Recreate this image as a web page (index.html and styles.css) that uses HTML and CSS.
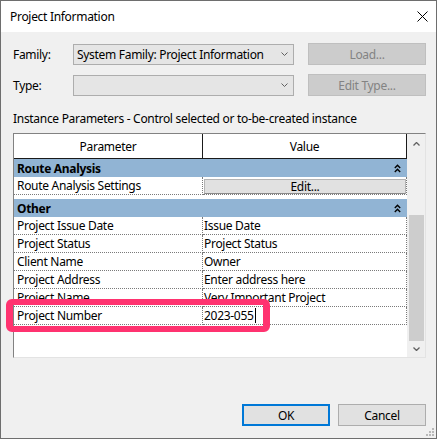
FILE: index.html
```html
<!DOCTYPE html>
<html>
<head>
<meta charset="utf-8">
<link rel="stylesheet" href="styles.css">
</head>
<body>
<div class="window">
  <div class="titlebar">
    <span class="title">Project Information</span>
    <svg class="close" width="11" height="11" viewBox="0 0 11 11"><path d="M0.5 0.5L10.5 10.5M10.5 0.5L0.5 10.5" stroke="#000" stroke-width="1" fill="none"/></svg>
  </div>
  <div class="content">
    <div class="form-row">
      <span class="form-label">Family:</span>
      <div class="combo"><span>System Family: Project Information</span><svg width="7" height="4" viewBox="0 0 7 4"><path d="M0.5 0.5L3.5 3.5L6.5 0.5" stroke="#606060" fill="none"/></svg></div>
      <div class="btn disabled side">Load...</div>
    </div>
    <div class="form-row">
      <span class="form-label">Type:</span>
      <div class="combo"><span></span><svg width="7" height="4" viewBox="0 0 7 4"><path d="M0.5 0.5L3.5 3.5L6.5 0.5" stroke="#606060" fill="none"/></svg></div>
      <div class="btn disabled side">Edit Type...</div>
    </div>
    <div class="section-label">Instance Parameters - Control selected or to-be-created instance</div>
    <div class="grid-frame">
      <div class="table">
        <div class="thead">
          <div class="th">Parameter</div>
          <div class="th">Value</div>
        </div>
        <div class="group"><span>Route Analysis</span><svg width="7" height="9" viewBox="0 0 7 9"><path d="M0.8 4L3.5 1.3L6.2 4M0.8 8L3.5 5.3L6.2 8" stroke="#000" stroke-width="1.4" fill="none"/></svg></div>
        <div class="row">
          <div class="cell">Route Analysis Settings</div>
          <div class="cell value edit-cell"><div class="edit-btn">Edit...</div></div>
        </div>
        <div class="spacer"></div>
        <div class="group"><span>Other</span><svg width="7" height="9" viewBox="0 0 7 9"><path d="M0.8 4L3.5 1.3L6.2 4M0.8 8L3.5 5.3L6.2 8" stroke="#000" stroke-width="1.4" fill="none"/></svg></div>
        <div class="row"><div class="cell">Project Issue Date</div><div class="cell value">Issue Date</div></div>
        <div class="row"><div class="cell">Project Status</div><div class="cell value">Project Status</div></div>
        <div class="row"><div class="cell">Client Name</div><div class="cell value">Owner</div></div>
        <div class="row"><div class="cell">Project Address</div><div class="cell value">Enter address here</div></div>
        <div class="row"><div class="cell">Project Name</div><div class="cell value">Very Important Project</div></div>
        <div class="row"><div class="cell">Project Number</div><div class="cell value">2023-055<span class="caret"></span></div></div>
        <div class="empty"></div>
      </div>
      <div class="scrollbar">
        <div class="arrow up"><svg width="7" height="4" viewBox="0 0 7 4"><path d="M0.5 3.5L3.5 0.5L6.5 3.5" stroke="#606060" stroke-width="1.3" fill="none"/></svg></div>
        <div class="thumb"></div>
        <div class="track-rest"></div>
        <div class="arrow down"><svg width="7" height="4" viewBox="0 0 7 4"><path d="M0.5 0.5L3.5 3.5L6.5 0.5" stroke="#606060" stroke-width="1.3" fill="none"/></svg></div>
      </div>
    </div>
    <div class="footer">
      <div class="btn ok">OK</div>
      <div class="btn">Cancel</div>
    </div>
  </div>
  <div class="highlight"></div>
  <svg class="grip" width="8" height="8" viewBox="0 0 8 8">
    <rect x="6" y="0" width="2" height="2" fill="#b8b8b8"/>
    <rect x="3" y="3" width="2" height="2" fill="#b8b8b8"/>
    <rect x="6" y="3" width="2" height="2" fill="#b8b8b8"/>
    <rect x="0" y="6" width="2" height="2" fill="#b8b8b8"/>
    <rect x="3" y="6" width="2" height="2" fill="#b8b8b8"/>
    <rect x="6" y="6" width="2" height="2" fill="#b8b8b8"/>
  </svg>
</div>
</body>
</html>
```

FILE: styles.css
```css
* { box-sizing: border-box; }
body {
  margin: 0;
  font-family: "Noto Sans", "Open Sans", sans-serif;
  font-size: 12px;
  letter-spacing: -0.3px;
  color: #000;
}
.window {
  position: relative;
  width: 437px;
  height: 439px;
  border: 1px solid #6e6e6e;
  background: #f0f0f0;
  display: flex;
  flex-direction: column;
}
.titlebar {
  height: 31px;
  background: #fff;
  display: flex;
  align-items: center;
  justify-content: space-between;
  padding: 0 8px 0 9px;
}
.title { font-size: 12px; }
.close { display: block; }
.content {
  flex: 1;
  display: flex;
  flex-direction: column;
  padding: 11px 10px 0 12px;
}
.form-row {
  display: flex;
  align-items: center;
  height: 22px;
}
.form-row + .form-row { margin-top: 9px; }
.form-label { width: 60px; }
.combo {
  width: 221px;
  height: 21px;
  border: 1px solid #adadad;
  background: #e5e5e5;
  display: flex;
  align-items: center;
  justify-content: space-between;
  padding: 0 5px 0 3px;
}
.combo svg { display: block; }
.btn {
  display: flex;
  align-items: center;
  justify-content: center;
  width: 88px;
  height: 22px;
  border: 1px solid #adadad;
  background: #e1e1e1;
}
.btn.side {
  width: 118px;
  margin-left: 14px;
}
.btn.disabled {
  background: #cccccc;
  border-color: #bfbfbf;
  color: #838383;
}
.btn.ok { border: 2px solid #0078d7; }
.section-label {
  margin-top: 15px;
  line-height: 16px;
  height: 16px;
  margin-bottom: 6px;
}
.grid-frame {
  display: flex;
  width: 413px;
  height: 225px;
  border-top: 1px solid #828282;
  border-left: 1px solid #828282;
  border-right: 1px solid #e3e3e3;
  border-bottom: 1px solid #e3e3e3;
}
.table {
  width: 393px;
  background: #fff;
  display: flex;
  flex-direction: column;
}
.thead {
  display: grid;
  grid-template-columns: 189px 204px;
  height: 25px;
  border-bottom: 1px solid #1a1a1a;
}
.th {
  display: flex;
  align-items: center;
  justify-content: center;
  border-right: 1px solid #1a1a1a;
}
.group {
  height: 18px;
  background: #91b4d4;
  font-weight: bold;
  display: flex;
  align-items: center;
  justify-content: space-between;
  padding: 0 6px 0 3px;
}
.group svg { display: block; }
.row {
  display: grid;
  grid-template-columns: 189px 204px;
  height: 18px;
}
.cell {
  border-right: 1px dotted #7a7a7a;
  border-bottom: 1px dotted #7a7a7a;
  padding-left: 3px;
  line-height: 17px;
  white-space: nowrap;
  overflow: hidden;
}
.cell.value { padding-left: 1px; }
.edit-cell { padding: 2px 0 0 0; }
.edit-btn {
  height: 15px;
  background: #e1e1e1;
  border: 1px solid #b4b4b4;
  border-bottom-color: #8a8a8a;
  display: flex;
  align-items: center;
  justify-content: center;
  line-height: 13px;
}
.spacer { height: 4px; }
.caret {
  display: inline-block;
  width: 1px;
  height: 15px;
  background: #000;
  vertical-align: -3px;
  margin-left: 1px;
}
.empty { flex: 1; }
.scrollbar {
  width: 18px;
  background: #f0f0f0;
  display: flex;
  flex-direction: column;
}
.arrow {
  display: flex;
  align-items: center;
  justify-content: center;
}
.arrow.up { height: 20px; }
.arrow.down { height: 16px; }
.arrow svg { display: block; }
.thumb {
  margin: 61px 0 0 2px;
  width: 15px;
  height: 127px;
  background: #cdcdcd;
}
.track-rest { flex: 1; }
.footer {
  display: flex;
  justify-content: flex-end;
  gap: 8px;
  margin-top: 46px;
}
.highlight {
  position: absolute;
  left: 5px;
  top: 298px;
  width: 264px;
  height: 33px;
  border: 6px solid #ff3370;
  border-left-width: 7px;
  border-right-width: 7px;
  border-radius: 6px;
}
.grip {
  position: absolute;
  right: 2px;
  bottom: 2px;
}
```
